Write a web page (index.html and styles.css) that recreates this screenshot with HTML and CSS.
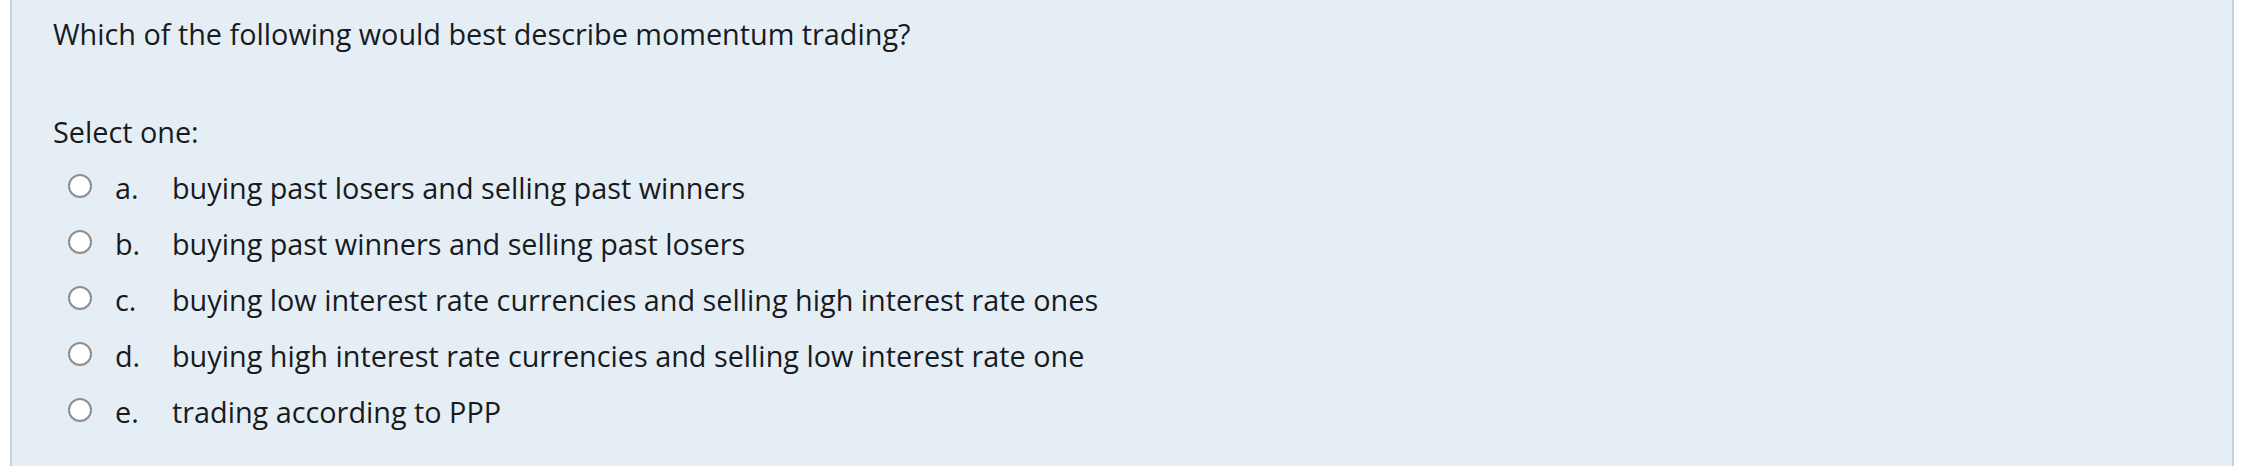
FILE: index.html
```html
<!DOCTYPE html>
<html lang="en">
<head>
<meta charset="utf-8">
<title>Question</title>
<link rel="stylesheet" href="styles.css">
</head>
<body>
<div class="formulation">
  <div class="qtext">Which of the following would best describe momentum trading?</div>
  <div class="prompt">Select one:</div>
  <div class="answer">
    <div class="option"><span class="radio"></span><span class="letter">a.</span><span class="text">buying past losers and selling past winners</span></div>
    <div class="option"><span class="radio"></span><span class="letter">b.</span><span class="text">buying past winners and selling past losers</span></div>
    <div class="option"><span class="radio"></span><span class="letter">c.</span><span class="text">buying low interest rate currencies and selling high interest rate ones</span></div>
    <div class="option"><span class="radio"></span><span class="letter">d.</span><span class="text">buying high interest rate currencies and selling low interest rate one</span></div>
    <div class="option"><span class="radio"></span><span class="letter">e.</span><span class="text">trading according to PPP</span></div>
  </div>
</div>
</body>
</html>
```
FILE: styles.css
```css
html, body {
  margin: 0;
  padding: 0;
  background: #ffffff;
  height: 100%;
}
body {
  font-family: "Open Sans", "Liberation Sans", sans-serif;
  font-size: 28.8px;
  line-height: 43.5px;
  color: #171b1f;
}
.formulation {
  box-sizing: border-box;
  margin-left: 10px;
  width: 2224px;
  height: 466px;
  background: #e6eef5;
  border-left: 2px solid #c3d3dd;
  border-right: 2px solid #c3d3dd;
  padding: 12px 0 0 41px;
}
.qtext {
  height: 43.5px;
}
.prompt {
  margin-top: 54.5px;
}
.answer {
  display: flex;
  flex-direction: column;
  margin-top: 6px;
}
.option {
  display: flex;
  align-items: center;
  height: 56px;
}
.radio {
  box-sizing: border-box;
  width: 24px;
  height: 24px;
  margin-left: 15px;
  margin-top: -4px;
  border: 2px solid #8f8f8f;
  border-radius: 50%;
  background: #ffffff;
  flex: none;
}
.letter {
  width: 57px;
  margin-left: 23px;
  flex: none;
}
```
